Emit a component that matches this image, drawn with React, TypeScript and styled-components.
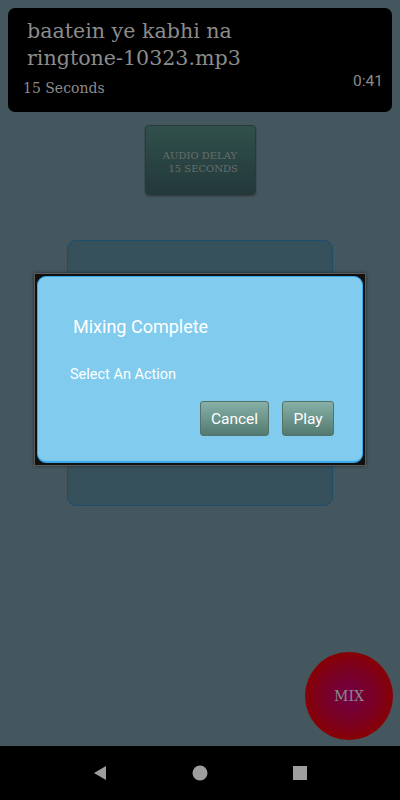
import styled, { createGlobalStyle } from 'styled-components';

const Global = createGlobalStyle`
  html, body {
    margin: 0;
    padding: 0;
    background: #44565e;
  }
  * { box-sizing: border-box; }
`;

const Screen = styled.div`
  width: 400px;
  height: 800px;
  display: flex;
  flex-direction: column;
  background: #44565e;
  position: relative;
  overflow: hidden;
`;

const Main = styled.main`
  flex: 1;
  position: relative;
  display: flex;
  flex-direction: column;
  align-items: center;
  padding: 8px;
`;

const TrackCard = styled.section`
  width: 100%;
  height: 104px;
  background: #000;
  border-radius: 7px;
  padding: 10px 9px 0 19px;
  display: flex;
  flex-direction: column;
`;

const TrackTitle = styled.div`
  font-family: 'DejaVu Serif', 'Noto Serif', serif;
  font-size: 20.6px;
  line-height: 27px;
  color: #8c8c8c;
`;

const TrackMeta = styled.div`
  display: flex;
  justify-content: space-between;
  align-items: flex-end;
  margin-top: 0;
`;

const Duration = styled.span`
  font-family: 'DejaVu Serif', 'Noto Serif', serif;
  font-size: 14px;
  color: #8c8c8c;
  margin-left: -4px;
`;

const Time = styled.span`
  font-family: Roboto, 'Noto Sans', sans-serif;
  font-size: 15.5px;
  color: #8c8c8c;
  margin-bottom: 6px;
`;

const DelayButton = styled.button`
  margin-top: 13px;
  width: 111px;
  height: 70px;
  border: 1px solid #2a3a38;
  border-radius: 4px;
  background: linear-gradient(#31504b, #22383a);
  box-shadow: 0 1px 2px rgba(0, 0, 0, 0.4);
  font-family: 'DejaVu Serif', 'Noto Serif', serif;
  font-size: 10px;
  line-height: 13px;
  color: #667069;
  white-space: pre;
  padding: 4px 0 0 0;
`;

const Panel = styled.div`
  margin-top: 45px;
  width: 266px;
  height: 266px;
  background: #36505c;
  border: 1px solid #1b4d6c;
  border-radius: 9px;
`;

const Overlay = styled.div`
  position: absolute;
  left: 34px;
  top: 273px;
  width: 332px;
  height: 193px;
  background: #111;
  border: 1px solid #5a5a5a;
  box-shadow: 0 0 3px rgba(0, 0, 0, 0.5);
  padding: 2px;
`;

const Dialog = styled.div`
  width: 100%;
  height: 100%;
  background: #80cbee;
  border-radius: 9px;
  border: 1px solid #3aa8ea;
  border-bottom-width: 2px;
  padding: 38px 28px 0 32px;
  display: flex;
  flex-direction: column;
  font-family: Roboto, 'Noto Sans', sans-serif;
  color: #fff;
`;

const DialogTitle = styled.h2`
  margin: 0 0 0 3px;
  font-weight: 400;
  font-size: 18px;
  line-height: 24px;
`;

const DialogText = styled.p`
  margin: 27px 0 0 0;
  font-size: 14.5px;
  line-height: 18px;
`;

const Actions = styled.div`
  display: flex;
  justify-content: flex-end;
  gap: 13px;
  margin-top: 17px;
`;

const ActionButton = styled.button<{ $w: number }>`
  width: ${(p) => p.$w}px;
  height: 35px;
  border: 1px solid #557268;
  border-radius: 3px;
  background: linear-gradient(#86b0a6, #537a70);
  font-family: Roboto, 'Noto Sans', sans-serif;
  font-size: 15.5px;
  color: #fff;
  padding: 0;
`;

const MixButton = styled.button`
  position: absolute;
  left: 305px;
  top: 652px;
  width: 88px;
  height: 88px;
  border-radius: 50%;
  border: none;
  background: radial-gradient(circle, #720046 0%, #7a0020 45%, #8a0000 75%, #8c0000 100%);
  font-family: 'DejaVu Serif', 'Noto Serif', serif;
  font-size: 14px;
  color: #8a8a8a;
  padding: 0;
`;

const NavBar = styled.nav`
  height: 54px;
  background: #000;
  display: flex;
  justify-content: space-around;
  align-items: center;
  padding: 0 50px;
`;

const NavSlot = styled.div`
  width: 100px;
  display: flex;
  justify-content: center;
`;

export default function App() {
  return (
    <Screen>
      <Global />
      <Main>
        <TrackCard>
          <TrackTitle>
            baatein ye kabhi na
            <br />
            ringtone-10323.mp3
          </TrackTitle>
          <TrackMeta>
            <Duration>15 Seconds</Duration>
            <Time>0:41</Time>
          </TrackMeta>
        </TrackCard>
        <DelayButton>{'AUDIO DELAY\n  15 SECONDS'}</DelayButton>
        <Panel />
      </Main>

      <Overlay>
        <Dialog>
          <DialogTitle>Mixing Complete</DialogTitle>
          <DialogText>Select An Action</DialogText>
          <Actions>
            <ActionButton $w={69}>Cancel</ActionButton>
            <ActionButton $w={52}>Play</ActionButton>
          </Actions>
        </Dialog>
      </Overlay>

      <MixButton>MIX</MixButton>

      <NavBar>
        <NavSlot>
          <svg width="14" height="16" viewBox="0 0 14 16">
            <path d="M13 1 L1 8 L13 15 Z" fill="#9e9e9e" />
          </svg>
        </NavSlot>
        <NavSlot>
          <svg width="16" height="16" viewBox="0 0 16 16">
            <circle cx="8" cy="8" r="7.5" fill="#9e9e9e" />
          </svg>
        </NavSlot>
        <NavSlot>
          <svg width="14" height="14" viewBox="0 0 14 14">
            <rect x="0" y="0" width="14" height="14" fill="#9e9e9e" />
          </svg>
        </NavSlot>
      </NavBar>
    </Screen>
  );
}
